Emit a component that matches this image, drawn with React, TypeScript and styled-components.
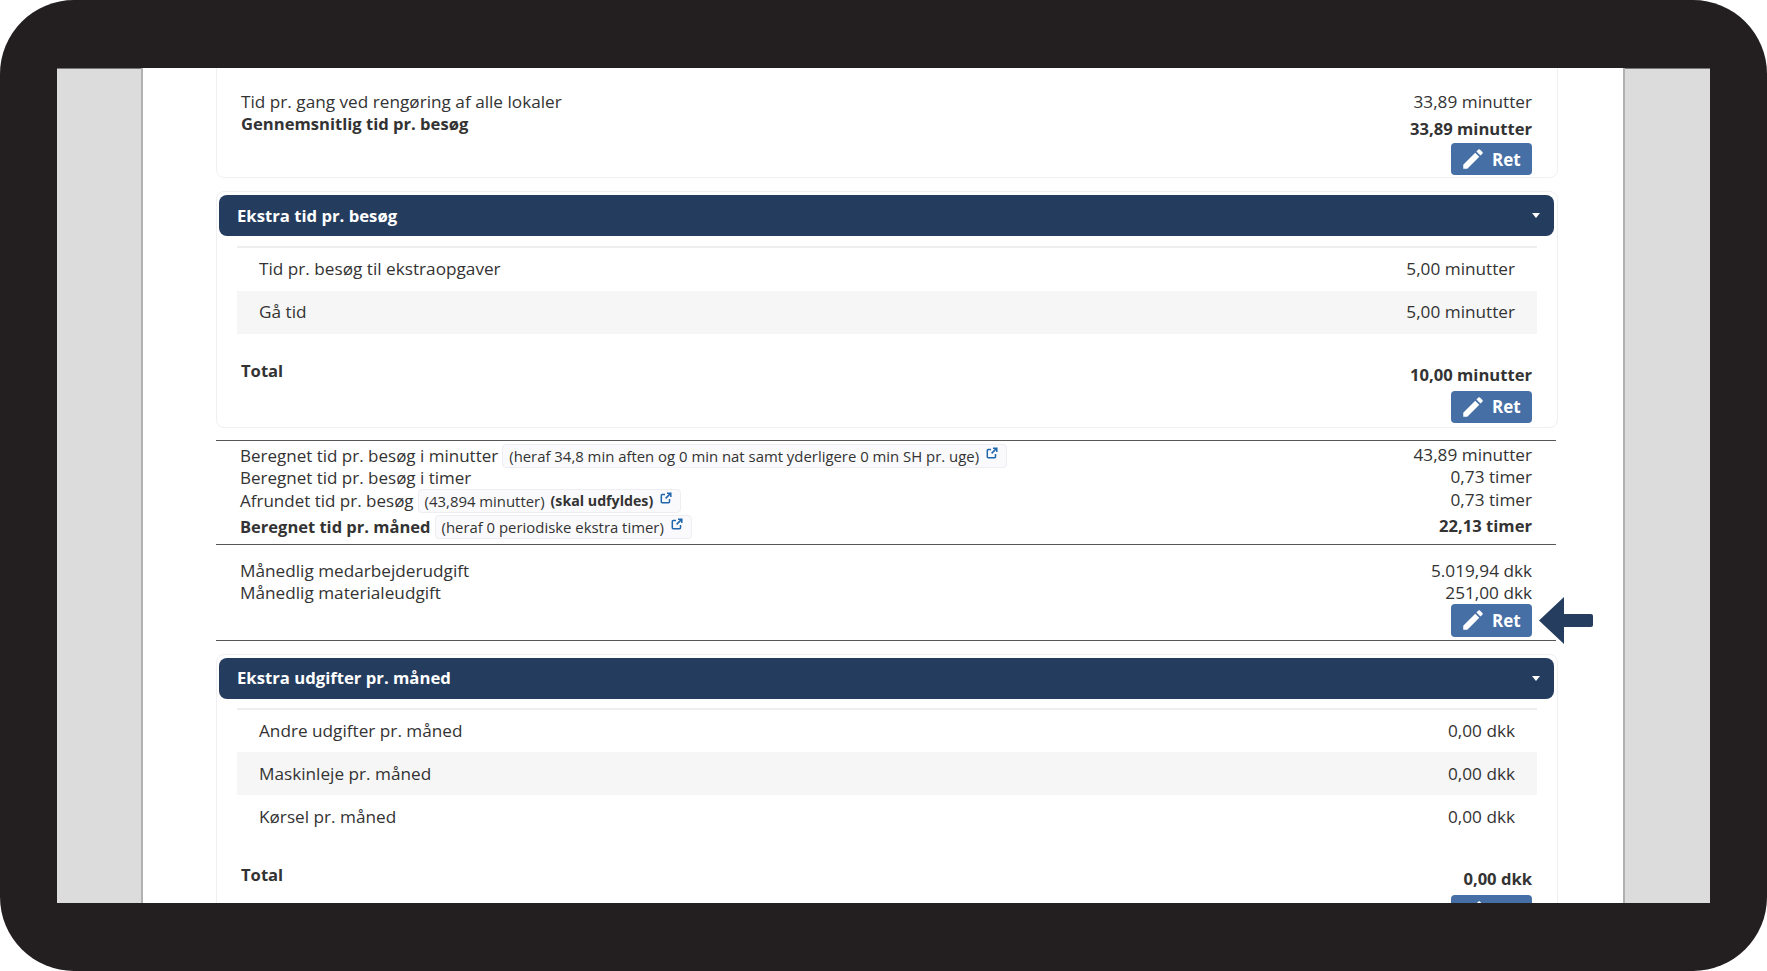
import React from "react";
import styled, { createGlobalStyle } from "styled-components";
import { MdEdit } from "react-icons/md";

const Global = createGlobalStyle`
  html, body { margin: 0; padding: 0; background: #fff; }
  body { font-family: "Open Sans", "Liberation Sans", sans-serif; color: #333; }
`;
const Frame = styled.div`
  width: 1767px; height: 971px; box-sizing: border-box; padding: 68px 57px;
  background: #231f20; border-radius: 74px; overflow: hidden;
`;
const Screen = styled.div`
  height: 835px; background: #dcdcdc; overflow: hidden; display: flex; padding-left: 84px;
  box-shadow: inset 0 1px 0 #777;
`;
const Page = styled.main`
  width: 1484px; box-sizing: border-box; flex: none; background: #fff;
  border-left: 2px solid #b0b0b0; border-right: 2px solid #b0b0b0;
  padding: 0 65px 0 73px;
  font-size: 17.2px; line-height: 22px;
`;
const Card = styled.section<{ $first?: boolean }>`
  border: 1px solid #f0f0f0; border-radius: 8px;
  margin-top: ${(p) => (p.$first ? "-20px" : "13px")};
  padding: ${(p) => (p.$first ? "42px 25px 2px 24px" : "3px 3px 4px 2px")};
`;
const Split = styled.div`
  display: flex; justify-content: space-between; align-items: flex-start;
`;
const TotalRow = styled(Split)`
  margin: 26px 22px 0 22px;
`;
const Left = styled.div``;
const Right = styled.div`
  display: flex; flex-direction: column; align-items: flex-end; text-align: right;
`;
const Strong = styled.div<{ $top?: number }>`
  font-weight: 700; font-size: 16.6px; margin-top: ${(p) => p.$top ?? 0}px;
`;
const Plain = styled.div``;
const EditButton = styled.button<{ $top?: number; $h?: number }>`
  width: 81px; height: ${(p) => p.$h ?? 32}px; margin-top: ${(p) => p.$top ?? 3}px; padding: 0 0 0 9px;
  display: flex; align-items: center; gap: 6px; border: 0; border-radius: 4px;
  background: #466fa6; color: #fff; font: 700 17px "Open Sans", sans-serif;
`;
const Header = styled.header`
  height: 41px; box-sizing: border-box; padding: 0 14px 0 18px;
  display: flex; align-items: center; justify-content: space-between;
  background: #243c5e; border-radius: 8px; color: #fff; font-weight: 700; font-size: 16.7px;
`;
const Caret = styled.span`
  width: 0; height: 0; border-left: 4.5px solid transparent; border-right: 4.5px solid transparent;
  border-top: 5px solid #fff;
`;
const List = styled.div<{ $top?: number }>`
  margin: ${(p) => p.$top ?? 10}px 17px 0 18px; border-top: 2px solid #eee;
`;
const ListRow = styled.div<{ $shaded?: boolean }>`
  height: 42.8px; padding: 0 22px; display: flex; align-items: center; justify-content: space-between;
  background: ${(p) => (p.$shaded ? "#f6f6f6" : "transparent")};
`;
const Ruled = styled.div`
  margin: 12px 2px 0 0; padding: 4px 0 2.5px 24px; border-top: 1px solid #555; border-bottom: 1px solid #555;
`;
const CalcRow = styled.div<{ $h?: number }>`
  display: flex; align-items: center; justify-content: space-between; height: ${(p) => p.$h ?? 22.5}px;
  padding-right: 24px; font-size: 17px;
`;
const LabelGroup = styled.div`
  display: flex; align-items: center; gap: 4px;
`;
const CalcValue = styled.span<{ $bold?: boolean }>`
  margin-bottom: 2px;
  font-weight: ${(p) => (p.$bold ? 700 : 400)};
  font-size: ${(p) => (p.$bold ? "16.6px" : "17.2px")};
`;
const BoldLabel = styled.b`
  font-size: 16.5px;
`;
const Badge = styled.span`
  display: inline-flex; align-items: center; gap: 8px; height: 24px; box-sizing: border-box;
  padding: 0 8px 0 6px; background: #fafafc; border: 1px solid #ededf2; border-radius: 4px;
  font-size: 14.9px; color: #333;
  b { font-size: 14.2px; margin-left: -2px; }
`;
const ExtIcon = styled.svg`
  flex: none; margin-bottom: 5px; margin-left: -1px; color: #1f66ad;
`;
const Monthly = styled.div`
  margin-right: 2px; padding: 15px 24px 3px 24px; border-bottom: 1px solid #555;
`;
const ButtonLine = styled.div`
  position: relative; display: flex; justify-content: flex-end;
`;
const Arrow = styled.svg`
  position: absolute; left: calc(100% + 7px); top: -7px;
`;

const Edit = ({ top, h }: { top?: number; h?: number }) => (
  <EditButton $top={top} $h={h}>
    <MdEdit size={26} />
    Ret
  </EditButton>
);
const Ext = () => (
  <ExtIcon width="12" height="12" viewBox="0 0 12 12" fill="none" stroke="currentColor" strokeWidth="1.5">
    <path d="M5 2.5H2.2a.9.9 0 0 0-.9.9v6.4a.9.9 0 0 0 .9.9h6.4a.9.9 0 0 0 .9-.9V7" />
    <path d="M7 1.2h3.8V5M10.6 1.4 5.6 6.4" />
  </ExtIcon>
);

export default function App() {
  return (
    <Frame>
      <Global />
      <Screen>
        <Page>
          <Card $first>
            <Split>
              <Left>
                <Plain>Tid pr. gang ved rengøring af alle lokaler</Plain>
                <Strong>Gennemsnitlig tid pr. besøg</Strong>
              </Left>
              <Right>
                <Plain>33,89 minutter</Plain>
                <Strong $top={5}>33,89 minutter</Strong>
                <Edit />
              </Right>
            </Split>
          </Card>
          <Card>
            <Header>Ekstra tid pr. besøg<Caret /></Header>
            <List>
              <ListRow><span>Tid pr. besøg til ekstraopgaver</span><span>5,00 minutter</span></ListRow>
              <ListRow $shaded><span>Gå tid</span><span>5,00 minutter</span></ListRow>
            </List>
            <TotalRow>
              <Strong>Total</Strong>
              <Right>
                <Strong $top={4}>10,00 minutter</Strong>
                <Edit top={5} />
              </Right>
            </TotalRow>
          </Card>
          <Ruled>
            <CalcRow>
              <LabelGroup>
                Beregnet tid pr. besøg i minutter
                <Badge>(heraf 34,8 min aften og 0 min nat samt yderligere 0 min SH pr. uge)<Ext /></Badge>
              </LabelGroup>
              <CalcValue>43,89 minutter</CalcValue>
            </CalcRow>
            <CalcRow><span>Beregnet tid pr. besøg i timer</span><CalcValue>0,73 timer</CalcValue></CalcRow>
            <CalcRow>
              <LabelGroup>
                Afrundet tid pr. besøg
                <Badge>(43,894 minutter)<b>(skal udfyldes)</b><Ext /></Badge>
              </LabelGroup>
              <CalcValue>0,73 timer</CalcValue>
            </CalcRow>
            <CalcRow $h={29}>
              <LabelGroup>
                <BoldLabel>Beregnet tid pr. måned</BoldLabel>
                <Badge>(heraf 0 periodiske ekstra timer)<Ext /></Badge>
              </LabelGroup>
              <CalcValue $bold>22,13 timer</CalcValue>
            </CalcRow>
          </Ruled>
          <Monthly>
            <Split>
              <Left>
                <Plain>Månedlig medarbejderudgift</Plain>
                <Plain>Månedlig materialeudgift</Plain>
              </Left>
              <Right>
                <Plain>5.019,94 dkk</Plain>
                <Plain>251,00 dkk</Plain>
              </Right>
            </Split>
            <ButtonLine>
              <Edit top={0} h={33} />
              <Arrow width="54" height="47" viewBox="0 0 54 47">
                <path d="M0 23.5 L25 0 V17 H52 Q54 17 54 19 V28 Q54 30 52 30 H25 V47 Z" fill="#253d5f" />
              </Arrow>
            </ButtonLine>
          </Monthly>
          <Card>
            <Header>Ekstra udgifter pr. måned<Caret /></Header>
            <List $top={9}>
              <ListRow><span>Andre udgifter pr. måned</span><span>0,00 dkk</span></ListRow>
              <ListRow $shaded><span>Maskinleje pr. måned</span><span>0,00 dkk</span></ListRow>
              <ListRow><span>Kørsel pr. måned</span><span>0,00 dkk</span></ListRow>
            </List>
            <TotalRow>
              <Strong>Total</Strong>
              <Right>
                <Strong $top={4}>0,00 dkk</Strong>
                <Edit top={5} />
              </Right>
            </TotalRow>
          </Card>
        </Page>
      </Screen>
    </Frame>
  );
}
